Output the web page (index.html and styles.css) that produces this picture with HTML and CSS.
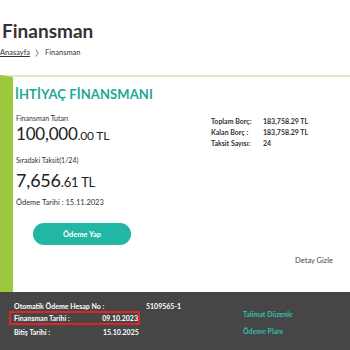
FILE: index.html
```html
<!DOCTYPE html>
<html lang="tr">
<head>
<meta charset="utf-8">
<link rel="stylesheet" href="styles.css">
</head>
<body>
<header class="page-head">
  <h1 class="page-title">Finansman</h1>
  <nav class="crumbs"><a class="crumb-link" href="#">Anasayfa</a><svg class="crumb-sep" width="4" height="8" viewBox="0 0 4 8"><polyline points="0.5,0.5 3.3,4 0.5,7.5" fill="none" stroke="#555" stroke-width="0.8"/></svg><span>Finansman</span></nav>
</header>
<section class="card">
  <div class="card-body">
    <h2 class="card-title">İHTİYAÇ FİNANSMANI</h2>
    <div class="cols">
      <div class="left">
        <div class="label">Finansman Tutarı</div>
        <div class="amount">100,000<span class="dec">.00 TL</span></div>
        <div class="label next">Sıradaki Taksit(1/24)</div>
        <div class="amount big">7,656<span class="dec">.61 TL</span></div>
        <div class="due">Ödeme Tarihi : 15.11.2023</div>
        <button class="pay">Ödeme Yap</button>
      </div>
      <div class="right">
        <div class="info">
          <span class="ik">Toplam Borç:</span><span class="iv">183,758.29 TL</span>
          <span class="ik">Kalan Borç :</span><span class="iv">183,758.29 TL</span>
          <span class="ik">Taksit Sayısı:</span><span class="iv">24</span>
        </div>
      </div>
    </div>
    <div class="toggle-row"><a class="toggle" href="#">Detay Gizle</a></div>
  </div>
</section>
<footer class="foot">
  <div class="foot-grid">
    <div class="frow first"><span class="fk wide">Otomatik Ödeme Hesap No :</span><span class="fv">5109565-1</span></div>
    <div class="frow hl"><span class="fk">Finansman Tarihi :</span><span class="fv">09.10.2023</span></div>
    <div class="frow last"><span class="fk">Bitiş Tarihi :</span><span class="fv">15.10.2025</span></div>
  </div>
  <div class="foot-links">
    <a class="flink" href="#">Talimat Düzenle</a>
    <a class="flink" href="#">Ödeme Planı</a>
  </div>
</footer>
</body>
</html>
```
FILE: styles.css
```css
* { box-sizing: border-box; }
html, body { margin: 0; padding: 0; background: #fff; }
body { font-family: Lato, "Noto Sans", sans-serif; color: #333; width: 350px; height: 350px; overflow: hidden; }

.page-head { padding: 20px 0 0 2px; height: 75px; }
.page-title { margin: 0; font-size: 19px; font-weight: 700; color: #333; line-height: 22px; }
.crumbs { margin-top: 6px; font-size: 7.5px; color: #333; display: flex; align-items: center; margin-left: -2px; }
.crumb-link { color: #333; text-decoration: underline; }
.crumb-sep { margin: 0 6px 0 5px; display: block; }

.card { border-left: 13px solid #9cc83d; border-top: 2px solid #e1e9c6; height: 217px; }
.card-body { padding: 8px 16px 0 2px; }
.card-title { margin: 0; font-size: 13px; font-weight: 700; color: #21a898; line-height: 18px; letter-spacing: 0.1px; }
.cols { display: flex; margin-top: 11px; padding-left: 1px; }
.left { width: 195px; }
.label { font-size: 7px; color: #333; line-height: 9px; }
.label.next { margin-top: 11px; }
.amount { font-size: 17px; color: #222; line-height: 18px; letter-spacing: -0.2px; margin-top: 2px; }
.amount .dec { font-size: 12px; }
.amount.big { font-size: 18px; margin-top: 5px; line-height: 20px; }
.amount.big .dec { font-size: 13px; }
.due { font-size: 7.5px; margin-top: 6px; color: #333; }
.pay { display: block; margin: 16px 0 0 17px; width: 98px; height: 22px; border: 0; border-radius: 11px; background: #22b6a4; color: #fff; font-family: inherit; font-weight: 700; font-size: 7.5px; }
.right { padding-top: 3px; }
.info { display: grid; grid-template-columns: 52px auto; row-gap: 2px; font-size: 7px; line-height: 9px; color: #333; font-weight: 700; }
.toggle-row { display: flex; justify-content: flex-end; margin-top: 11px; padding-right: 1px; }
.toggle { font-size: 7.5px; color: #444; text-decoration: none; }

.foot { background: #464646; height: 58px; display: flex; padding: 9px 0 0 14px; color: #fff; font-weight: 700; font-size: 7px; }
.foot-grid { width: 229px; }
.frow { display: flex; align-items: center; white-space: nowrap; }
.frow.first { height: 10px; }
.frow.last { height: 13px; }
.fk { width: 89px; }
.fk.wide { width: 132px; }
.frow.hl { border: 2px solid #e0242a; height: 14px; margin-left: -5px; padding-left: 3px; width: 131px; }
.foot-links { display: flex; flex-direction: column; padding-top: 5px; }
.flink { color: #2ec0a8; text-decoration: none; line-height: 17px; }
```
